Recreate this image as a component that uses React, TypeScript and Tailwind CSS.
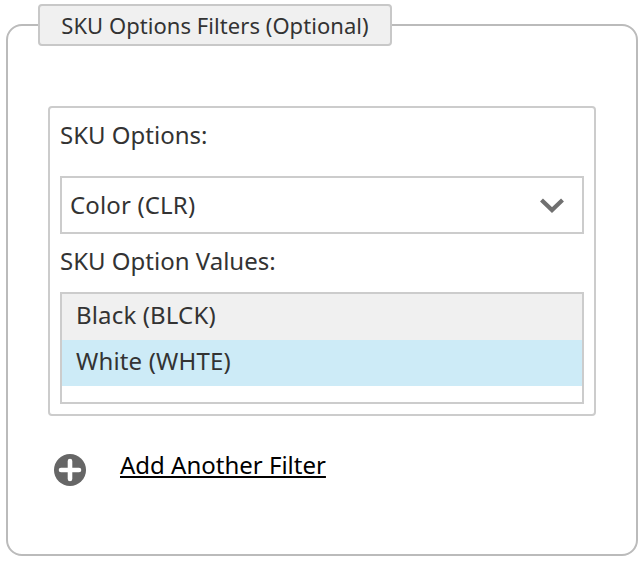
export default function App() {
  return (
    <div className="h-[568px] w-[642px] overflow-hidden bg-white pt-1 pl-1.5 font-['Noto_Sans','Open_Sans',sans-serif] text-[24px] leading-[32px] text-[#333]">
      <fieldset className="h-[552px] w-[632px] rounded-[16px] border-2 border-[#bbb] pl-[40px]">
        <legend className="-ml-[10px] flex h-[42px] w-[354px] items-center justify-center rounded-[4px] border-2 border-[#c8c8c8] bg-[#f0f0f0] text-[22px] tracking-[0.05px]">
          SKU Options Filters (Optional)
        </legend>
        <div className="mt-[60px] h-[310px] w-[548px] rounded-[4px] border-2 border-[#ccc] px-[10px] pt-[11px]">
          <div>SKU Options:</div>
          <div className="mt-[25px] flex h-[58px] items-center justify-between border-2 border-[#ccc] pr-[17px] pl-2">
            <span className="tracking-[0.15px]">Color (CLR)</span>
            <svg width="26" height="17" viewBox="0 0 26 17" fill="none" stroke="#707070" strokeWidth="4.2"><path d="M2.5 3L13 13L23.5 3" /></svg>
          </div>
          <div className="mt-[11px]">SKU Option Values:</div>
          <div className="mt-[15px] h-[112px] border-2 border-[#ccc] tracking-[0.15px]">
            <div className="h-[46px] bg-[#f0f0f0] pt-[5px] pl-[14px]">Black (BLCK)</div>
            <div className="h-[46px] bg-[#cdebf7] pt-[5px] pl-[14px]">White (WHTE)</div>
          </div>
        </div>
        <div className="mt-[36px] ml-[5px] flex items-start text-black">
          <svg className="mt-[1px]" width="34" height="34" viewBox="0 0 34 34"><circle cx="17" cy="17" r="16" fill="#666" /><path d="M17 8V26M8 17H26" stroke="#fff" strokeWidth="4.6" strokeLinecap="round" /></svg>
          <a className="-mt-[3px] ml-[33px] underline decoration-2 underline-offset-2">Add Another Filter</a>
        </div>
      </fieldset>
    </div>
  );
}
